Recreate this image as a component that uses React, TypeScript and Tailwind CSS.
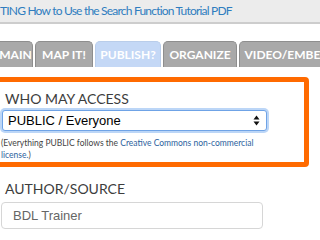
export default function App() {
  const tabs = [
    { label: "MAIN", w: "w-[45px]", active: false, pad: "pl-[10px]" },
    { label: "MAP IT!", w: "w-[58px]", active: false, pad: "" },
    { label: "PUBLISH?", w: "w-[66px]", active: true, pad: "" },
    { label: "ORGANIZE", w: "w-[74px]", active: false, pad: "" },
    { label: "VIDEO/EMBED", w: "w-[96px]", active: false, pad: "" },
  ];

  return (
    <div className="relative h-[240px] w-[320px] overflow-hidden bg-white font-['Lato',sans-serif]">
      {/* Title bar */}
      <div className="h-[24px] border-b-2 border-[#cdcdcd] bg-[#ececec]">
        <div className="whitespace-nowrap text-[12px] leading-[22px] tracking-[-0.8px] text-[#2f7dbf]">
          TING How to Use the Search Function Tutorial PDF
        </div>
      </div>

      {/* Tabs */}
      <div className="mt-[17px] ml-[-12px] flex gap-[2px] whitespace-nowrap">
        {tabs.map((t) => (
          <div
            key={t.label}
            className={`flex h-[26px] shrink-0 items-center justify-center rounded-t-[5px] border border-b-0 text-[12px] font-bold text-white ${t.w} ${t.pad} ${
              t.active ? "border-[#b9cdea] bg-[#c4d8f6]" : "border-[#8e8e8e] bg-[#a9a9a9]"
            }`}
          >
            {t.label}
          </div>
        ))}
      </div>

      {/* Access box */}
      <div className="mt-[10px] ml-[-10px] h-[90px] w-[319px] rounded-[4px] border-[5px] border-[#ff6a00] pl-[10px] pt-[8px]">
        <div className="text-[14px] leading-[17px] text-[#3d3d3d]">WHO MAY ACCESS</div>
        <div className="mt-[3px] ml-[-3px] flex h-[21px] w-[265px] items-center justify-between rounded-[3px] border border-[#6fa3e6] bg-white pl-[5px] pr-[6px] shadow-[0_0_0_2px_#bcd6f7]">
          <span className="font-['Liberation_Sans',sans-serif] text-[13px] text-black">PUBLIC / Everyone</span>
          <svg width="7" height="11" viewBox="0 0 7 11">
            <path d="M3.5 0.5 L6.5 4.5 L0.5 4.5 Z" fill="#111" />
            <path d="M3.5 10.5 L6.5 6.5 L0.5 6.5 Z" fill="#111" />
          </svg>
        </div>
        <div className="mt-[6px] ml-[-4px] whitespace-nowrap text-[8.5px] leading-[12px] text-[#444]">
          (Everything PUBLIC follows the{" "}
          <span className="text-[#2c5f9e]">Creative Commons non-commercial</span>
          <br />
          <span className="text-[#2c5f9e]">license.</span>)
        </div>
      </div>

      {/* Author */}
      <div className="pl-[5px] pt-[13px] text-[14px] leading-[17px] text-[#3d3d3d]">AUTHOR/SOURCE</div>
      <div className="mt-[5px] ml-[1px] flex h-[27px] w-[262px] items-center rounded-[4px] border border-[#d6d6d6] bg-white pl-[11px]">
        <span className="font-['Liberation_Sans',sans-serif] text-[13px] text-[#666]">BDL Trainer</span>
      </div>
    </div>
  );
}
